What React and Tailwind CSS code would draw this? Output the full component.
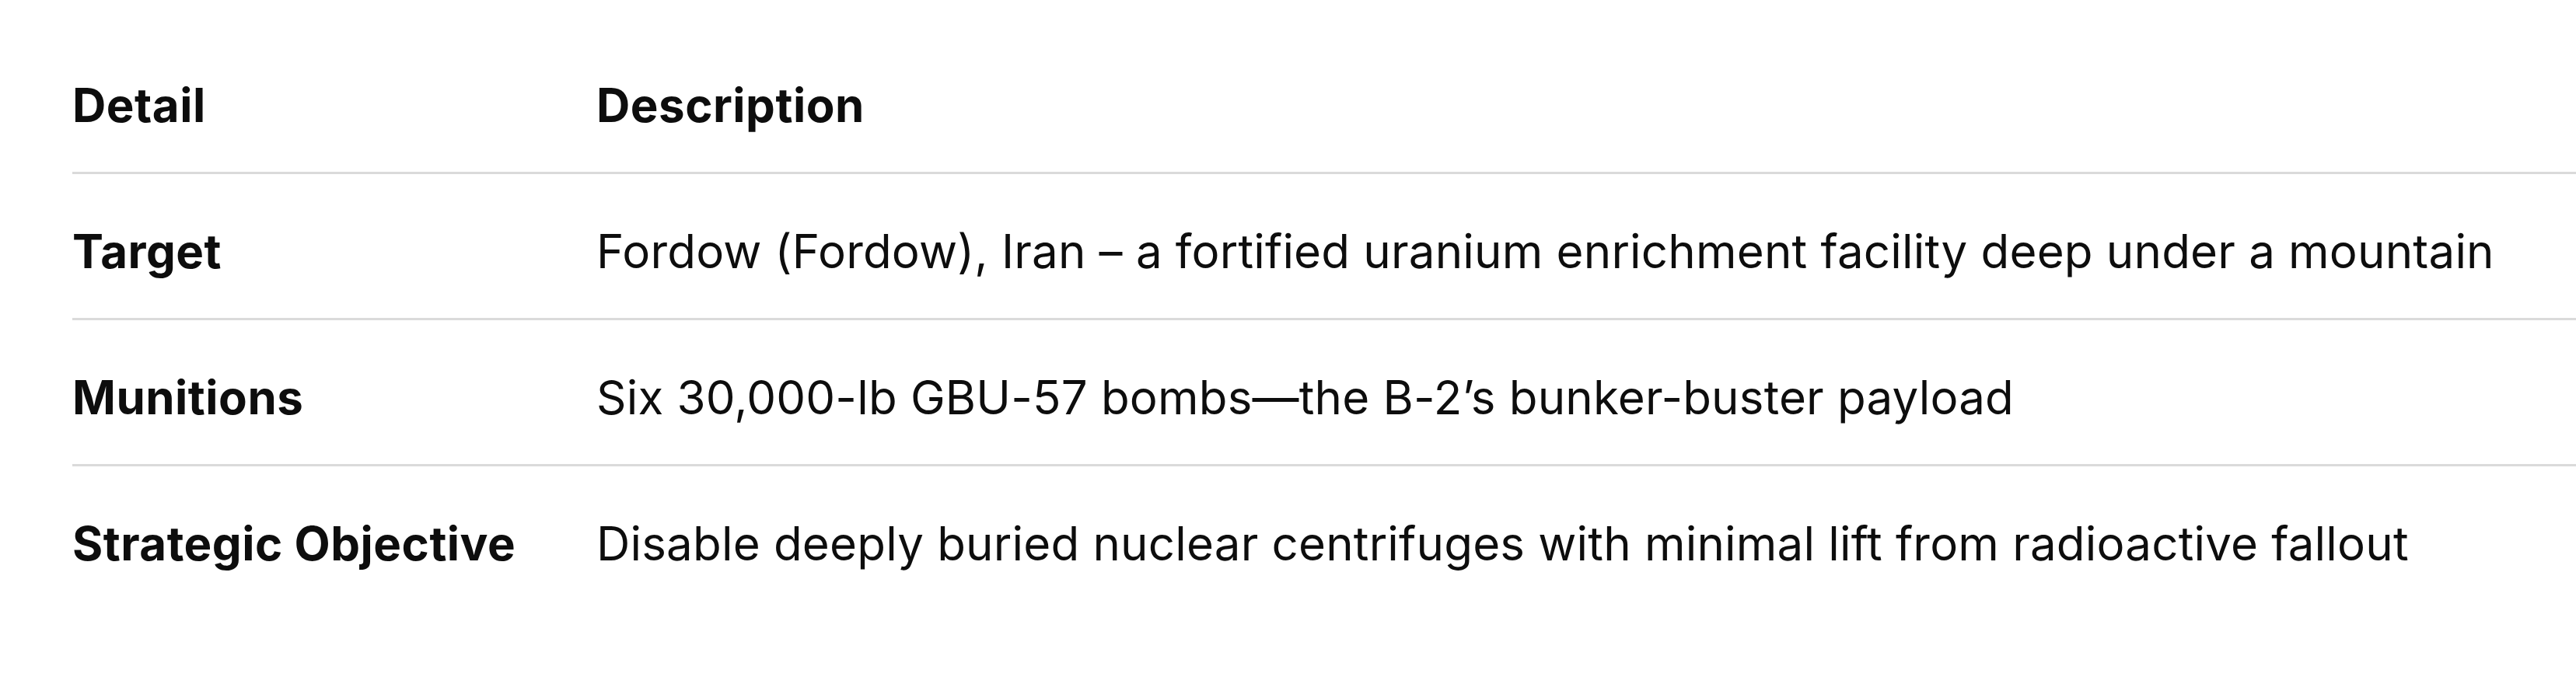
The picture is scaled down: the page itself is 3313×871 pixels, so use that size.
export default function App() {
  const rows = [
    ["Target", "Fordow (Fordow), Iran – a fortified uranium enrichment facility deep under a mountain"],
    ["Munitions", "Six 30,000-lb GBU-57 bombs—the B-2’s bunker-buster payload"],
    ["Strategic Objective", "Disable deeply buried nuclear centrifuges with minimal lift from radioactive fallout"],
  ];
  return (
    <div className="w-[3313px] h-[871px] bg-white pt-[36px] pl-[93px] text-[#0d0d0d] font-['Inter',sans-serif] text-[60px] leading-[60px] overflow-hidden">
      <div className="flex border-b-[3px] border-[#dadada]">
        <div className="w-[674px] shrink-0 pt-[69px] pb-[56px] font-bold tracking-[0.5px]">Detail</div>
        <div className="pt-[69px] pb-[56px] font-bold tracking-[0.5px]">Description</div>
      </div>
      {rows.map(([k, v], i) => (
        <div
          key={k}
          className={i < rows.length - 1 ? "flex border-b-[3px] border-[#dadada]" : "flex"}
        >
          <div className="w-[674px] shrink-0 pt-[69px] pb-[56px] font-bold tracking-[0.5px]">{k}</div>
          <div className="pt-[69px] pb-[56px] whitespace-nowrap tracking-[0.2px]">{v}</div>
        </div>
      ))}
    </div>
  );
}
